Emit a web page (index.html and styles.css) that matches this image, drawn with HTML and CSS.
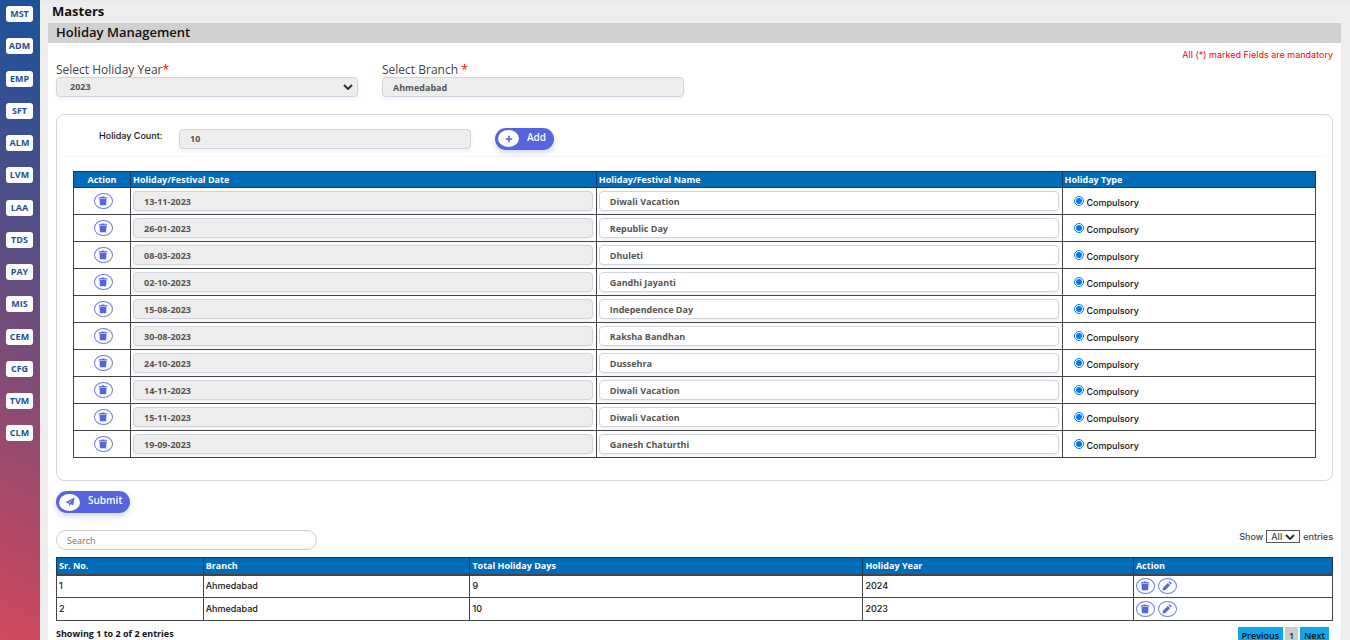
FILE: index.html
```html
<!DOCTYPE html>
<html lang="en">
<head>
<meta charset="utf-8">
<title>Holiday Management</title>
<link rel="stylesheet" href="styles.css">
</head>
<body>
<svg class="sprite" aria-hidden="true">
  <symbol id="trash" viewBox="0 0 12 12"><path d="M1 1.500h3l.6-1h2.800L8 1.500h3v1.500H1zM1.800 3.600h8.400l-.5 7.600H2.300z"/></symbol>
  <symbol id="pencil" viewBox="0 0 12 12"><path d="M.5 11.500l.8-3.500L7 2.300l2.700 2.700L4 10.700zM7.700 1.600l.8-.8q.6-.5 1.200 0l1.500 1.500q.5.600 0 1.200l-.8.800z"/></symbol>
  <symbol id="plus" viewBox="0 0 12 12"><path d="M5 2h2v3h3v2H7v3H5V7H2V5h3z"/></symbol>
  <symbol id="plane" viewBox="0 0 12 12"><path fill-rule="evenodd" d="M11.500.500L9.800 10 6.700 8.700 5 11V8L.500 6.300zM9 3L4.500 7l.800.500z"/></symbol>
</svg>
<div class="shell">
  <nav class="sidebar" aria-label="Modules">
    <ul class="modules">
      <li><a href="#">MST</a></li><li><a href="#">ADM</a></li><li><a href="#">EMP</a></li><li><a href="#">SFT</a></li><li><a href="#">ALM</a></li><li><a href="#">LVM</a></li><li><a href="#">LAA</a></li><li><a href="#">TDS</a></li><li><a href="#">PAY</a></li><li><a href="#">MIS</a></li><li><a href="#">CEM</a></li><li><a href="#">CFG</a></li><li><a href="#">TVM</a></li><li><a href="#">CLM</a></li>
    </ul>
  </nav>
  <main class="main">
    <h1 class="crumb">Masters</h1>
    <h2 class="title">Holiday Management</h2>
    <div class="panel">
      <p class="mandatory">All (*) marked Fields are mandatory</p>
      <div class="filters">
        <div class="field">
          <label for="year">Select Holiday Year<span class="req">*</span></label>
          <div class="select-wrap"><select id="year" class="control"><option>2023</option></select><svg class="chevron" viewBox="0 0 10 6" aria-hidden="true"><path d="M1 1l4 4 4-4"/></svg></div>
        </div>
        <div class="field">
          <label for="branch">Select Branch <span class="req">*</span></label>
          <input id="branch" class="control" value="Ahmedabad" readonly>
        </div>
      </div>

      <section class="card">
        <div class="count-row">
          <label for="count">Holiday Count:</label>
          <input id="count" class="control" value="10" readonly>
          <button class="pill" type="button"><span class="disc"><svg><use href="#plus"/></svg></span><span>Add</span></button>
        </div>
        <table class="grid holidays">
          <colgroup><col class="h-action"><col class="h-date"><col class="h-name"><col class="h-type"></colgroup>
          <thead><tr><th>Action</th><th>Holiday/Festival Date</th><th>Holiday/Festival Name</th><th>Holiday Type</th></tr></thead>
          <tbody>
            <tr><td><button class="icon" type="button" aria-label="Delete"><svg><use href="#trash"/></svg></button></td><td><input class="control" aria-label="Date" value="13-11-2023" readonly></td><td><input class="control open" aria-label="Name" value="Diwali Vacation"></td><td><label class="type"><input type="radio" name="t1" checked><span>Compulsory</span></label></td></tr>
            <tr><td><button class="icon" type="button" aria-label="Delete"><svg><use href="#trash"/></svg></button></td><td><input class="control" aria-label="Date" value="26-01-2023" readonly></td><td><input class="control open" aria-label="Name" value="Republic Day"></td><td><label class="type"><input type="radio" name="t2" checked><span>Compulsory</span></label></td></tr>
            <tr><td><button class="icon" type="button" aria-label="Delete"><svg><use href="#trash"/></svg></button></td><td><input class="control" aria-label="Date" value="08-03-2023" readonly></td><td><input class="control open" aria-label="Name" value="Dhuleti"></td><td><label class="type"><input type="radio" name="t3" checked><span>Compulsory</span></label></td></tr>
            <tr><td><button class="icon" type="button" aria-label="Delete"><svg><use href="#trash"/></svg></button></td><td><input class="control" aria-label="Date" value="02-10-2023" readonly></td><td><input class="control open" aria-label="Name" value="Gandhi Jayanti"></td><td><label class="type"><input type="radio" name="t4" checked><span>Compulsory</span></label></td></tr>
            <tr><td><button class="icon" type="button" aria-label="Delete"><svg><use href="#trash"/></svg></button></td><td><input class="control" aria-label="Date" value="15-08-2023" readonly></td><td><input class="control open" aria-label="Name" value="Independence Day"></td><td><label class="type"><input type="radio" name="t5" checked><span>Compulsory</span></label></td></tr>
            <tr><td><button class="icon" type="button" aria-label="Delete"><svg><use href="#trash"/></svg></button></td><td><input class="control" aria-label="Date" value="30-08-2023" readonly></td><td><input class="control open" aria-label="Name" value="Raksha Bandhan"></td><td><label class="type"><input type="radio" name="t6" checked><span>Compulsory</span></label></td></tr>
            <tr><td><button class="icon" type="button" aria-label="Delete"><svg><use href="#trash"/></svg></button></td><td><input class="control" aria-label="Date" value="24-10-2023" readonly></td><td><input class="control open" aria-label="Name" value="Dussehra"></td><td><label class="type"><input type="radio" name="t7" checked><span>Compulsory</span></label></td></tr>
            <tr><td><button class="icon" type="button" aria-label="Delete"><svg><use href="#trash"/></svg></button></td><td><input class="control" aria-label="Date" value="14-11-2023" readonly></td><td><input class="control open" aria-label="Name" value="Diwali Vacation"></td><td><label class="type"><input type="radio" name="t8" checked><span>Compulsory</span></label></td></tr>
            <tr><td><button class="icon" type="button" aria-label="Delete"><svg><use href="#trash"/></svg></button></td><td><input class="control" aria-label="Date" value="15-11-2023" readonly></td><td><input class="control open" aria-label="Name" value="Diwali Vacation"></td><td><label class="type"><input type="radio" name="t9" checked><span>Compulsory</span></label></td></tr>
            <tr><td><button class="icon" type="button" aria-label="Delete"><svg><use href="#trash"/></svg></button></td><td><input class="control" aria-label="Date" value="19-09-2023" readonly></td><td><input class="control open" aria-label="Name" value="Ganesh Chaturthi"></td><td><label class="type"><input type="radio" name="t10" checked><span>Compulsory</span></label></td></tr>
          </tbody>
        </table>
      </section>

      <button class="pill" type="submit"><span class="disc"><svg><use href="#plane"/></svg></span><span>Submit</span></button>

      <div class="tools">
        <input class="search" type="search" placeholder="Search" aria-label="Search">
        <label class="entries">Show <span class="select-wrap"><select><option>All</option></select><svg class="chevron" viewBox="0 0 10 6" aria-hidden="true"><path d="M1 1l4 4 4-4"/></svg></span> entries</label>
      </div>
      <table class="grid summary">
        <colgroup><col class="s-no"><col class="s-branch"><col class="s-days"><col class="s-year"><col class="s-action"></colgroup>
        <thead><tr><th>Sr. No.</th><th>Branch</th><th>Total Holiday Days</th><th>Holiday Year</th><th>Action</th></tr></thead>
        <tbody>
          <tr><td>1</td><td>Ahmedabad</td><td>9</td><td>2024</td><td><div class="actions"><button class="icon" type="button" aria-label="Delete"><svg><use href="#trash"/></svg></button><button class="icon" type="button" aria-label="Edit"><svg><use href="#pencil"/></svg></button></div></td></tr>
          <tr><td>2</td><td>Ahmedabad</td><td>10</td><td>2023</td><td><div class="actions"><button class="icon" type="button" aria-label="Delete"><svg><use href="#trash"/></svg></button><button class="icon" type="button" aria-label="Edit"><svg><use href="#pencil"/></svg></button></div></td></tr>
        </tbody>
      </table>
      <div class="footer">
        <p class="info">Showing 1 to 2 of 2 entries</p>
        <div class="pages"><button type="button">Previous</button><button class="current" type="button">1</button><button type="button">Next</button></div>
      </div>
    </div>
  </main>
</div>
</body>
</html>
```
FILE: styles.css
```css
* { box-sizing: border-box; }
html { scrollbar-width: none; }
body { margin: 0; background: #eee; color: #111; font: 600 9px/12px "Open Sans", "Noto Sans", sans-serif; }
h1, h2, p, ul { margin: 0; padding: 0; }
input, select, button { font: inherit; color: inherit; margin: 0; }
.sprite { position: absolute; width: 0; height: 0; }
.shell { display: flex; height: 100vh; overflow: hidden; }

.sidebar { flex: none; width: 40px; background: linear-gradient(205deg, #1b539a 0%, #2b5195 12%, #5f4d82 42%, #a24a6c 74%, #d0495c 100%); }
.modules { display: flex; flex-direction: column; justify-content: space-between; height: 69vh; padding: 6px 6px 0; list-style: none; }
.modules a { display: block; width: 27px; border-radius: 3px; background: #fff; color: #1f4f94; font-weight: 700; line-height: 16px; text-align: center; text-decoration: none; }

.main { flex: 1; min-width: 0; padding: 0 9px 0 8px; background: linear-gradient(#e9e9e9, #eee 8px); }
.crumb { padding: 3px 4px 4px; font-size: 13px; line-height: 16px; font-weight: 700; }
.title { padding: 0 8px 2px; background: #d0d0d0; font-size: 13px; line-height: 18px; font-weight: 600; }
.panel { padding: 6px 8px 0; background: #fff; }
.mandatory, .count-row label, .type, .entries, .summary td { font-family: Inter, "Open Sans", sans-serif; font-weight: 500; }
.mandatory { color: #f00; font-weight: 400; text-align: right; }

.filters { display: flex; gap: 24px; margin-bottom: 17px; }
.field { width: 302px; }
.field label { display: block; padding-top: 2px; color: #444; font-size: 12px; line-height: 14px; font-weight: 400; }
.req { color: #f00; }
.control { display: block; width: 100%; height: 20px; padding: 0 10px; border: 1px solid #d0d4de; border-radius: 4px; background: #ededed; box-shadow: 0 2px 4px #eeeef6; color: #555; font-weight: 700; outline: 0; }
.open { background: #fff; }
select { appearance: none; }
.select-wrap { display: block; position: relative; }
select.control { padding-left: 13px; }
.chevron { position: absolute; right: 5px; top: 7px; width: 10px; height: 6px; fill: none; stroke: #333; stroke-width: 2; pointer-events: none; }

.card { margin-bottom: 10px; padding: 0 16px 22px; border: 1px solid #d8d8d8; border-radius: 8px; }
.count-row { display: flex; align-items: center; height: 42px; margin: 0 -10px 14px; padding: 6px 0 0 36px; border-bottom: 1px solid #f5f5f5; }
.count-row label { width: 80px; padding-bottom: 6px; }
.count-row .control { width: 292px; margin-right: 24px; }

.pill { display: flex; gap: 8px; height: 22px; padding: 0 8px 0 3px; border: 0; border-radius: 11px; background: #5664df; box-shadow: 0 3px 6px #d5d8f8; color: #fff; font-size: 10px; line-height: 19px; }
.disc { display: grid; place-items: center; align-self: center; width: 21px; height: 17px; border-radius: 50%; background: #fff; }
.disc svg { width: 10px; height: 10px; fill: #5664df; }

.grid { width: 100%; border-collapse: collapse; table-layout: fixed; }
.grid th, .grid td { border: 1px solid #444; text-align: left; }
.grid th { height: 17px; padding: 0 2px; border-color: #123a5c; background: #006bb8; color: #fff; }
.holidays th { height: 16px; font-weight: 700; }
.holidays td { height: 27px; padding: 0 3px 0 2px; }
.holidays th:first-child, .holidays td:first-child { text-align: center; }
.holidays td:first-child { padding-left: 5px; }
.h-action { width: 57px; }
.h-date, .h-name { width: 37.5%; }
.icon { display: inline-grid; place-items: center; width: 19px; height: 16px; padding: 0; border: 1px solid #6f7ce6; border-radius: 50%; background: #fff; vertical-align: middle; }
.icon svg { width: 10px; height: 10px; fill: #5664df; }
.type { display: flex; align-items: center; gap: 3px; padding-left: 9px; }
.type input { width: 10px; height: 10px; }
.type span { padding-top: 3px; }

.tools { display: flex; justify-content: space-between; align-items: flex-start; height: 20px; margin: 17px 0 7px; }
.search { width: 261px; height: 20px; padding: 0 10px; border: 1px solid #ccc; border-radius: 10px; background: #fff; font-weight: 400; }
.entries { display: flex; align-items: center; gap: 3px; color: #444; }
.entries select { display: block; width: 34px; height: 13px; padding: 0 4px; border: 1px solid #555; background: #fff; line-height: 11px; }
.entries .chevron { top: 4px; }
.summary thead th { border-bottom: 2px solid #444; }
.summary td { height: 23px; padding: 0 2px; }
.s-no { width: 11.5%; }
.s-branch { width: 20.9%; }
.s-days { width: 30.8%; }
.s-year { width: 21.2%; }
.actions { display: flex; gap: 3px; }

.footer { display: flex; justify-content: space-between; padding-top: 6px; }
.info { font-weight: 700; line-height: 14px; }
.pages { display: flex; gap: 2px; padding-right: 4px; }
.pages button { height: 18px; padding: 0 4px; border: 0; background: #10a5e8; }
.pages .current { background: #ccc; }
```
